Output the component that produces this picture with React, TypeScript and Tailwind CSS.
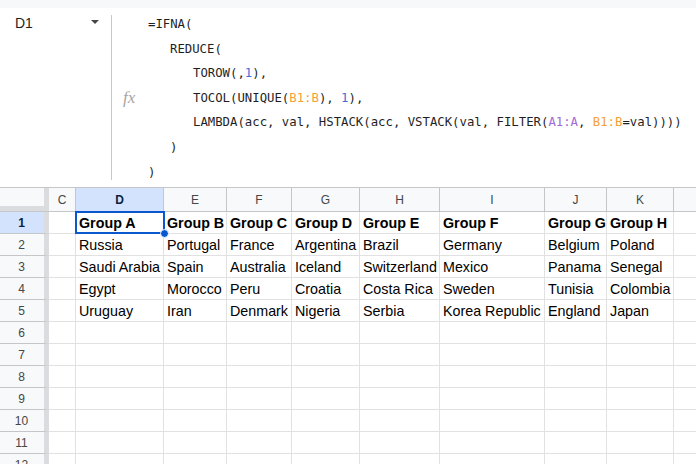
import React from 'react'

const COLS = [
  { label: 'C', w: 27 },
  { label: 'D', w: 88 },
  { label: 'E', w: 63 },
  { label: 'F', w: 65 },
  { label: 'G', w: 68 },
  { label: 'H', w: 80 },
  { label: 'I', w: 105 },
  { label: 'J', w: 62 },
  { label: 'K', w: 67 },
  { label: '', w: 40 },
]

const DATA: string[][] = [
  ['Group A', 'Group B', 'Group C', 'Group D', 'Group E', 'Group F', 'Group G', 'Group H'],
  ['Russia', 'Portugal', 'France', 'Argentina', 'Brazil', 'Germany', 'Belgium', 'Poland'],
  ['Saudi Arabia', 'Spain', 'Australia', 'Iceland', 'Switzerland', 'Mexico', 'Panama', 'Senegal'],
  ['Egypt', 'Morocco', 'Peru', 'Croatia', 'Costa Rica', 'Sweden', 'Tunisia', 'Colombia'],
  ['Uruguay', 'Iran', 'Denmark', 'Nigeria', 'Serbia', 'Korea Republic', 'England', 'Japan'],
]

const Num = ({ children }: { children: React.ReactNode }) => (
  <span className="text-[#3f6fd6]">{children}</span>
)
const Orange = ({ children }: { children: React.ReactNode }) => (
  <span className="text-[#f2a03a]">{children}</span>
)
const Purple = ({ children }: { children: React.ReactNode }) => (
  <span className="text-[#a06bd6]">{children}</span>
)

const FormulaBar = () => (
  <div className="flex h-[179px] bg-white">
    <div className="flex w-[111px] items-start justify-between pl-[15px] pr-[12px] pt-[6px]">
      <span className="font-['Liberation_Sans',sans-serif] text-[14px] leading-[18px] text-[#1f1f1f]">
        D1
      </span>
      <span className="mt-[6px] h-0 w-0 border-x-[4px] border-t-[4px] border-x-transparent border-t-[#444746]" />
    </div>
    <div className="my-[7px] w-px bg-[#c7c7c7]" />
    <div className="flex w-[36px] items-center pl-[11px]">
      <span className="font-['Liberation_Serif',serif] text-[17px] italic text-[#a6a6a6]">fx</span>
    </div>
    <div className="whitespace-pre pt-[4px] font-['DejaVu_Sans_Mono',monospace] text-[12.3px] leading-[24.6px] text-[#1f1f1f]">
      <div>=IFNA(</div>
      <div className="pl-[22px]">REDUCE(</div>
      <div className="pl-[45px]">
        TOROW(,<Num>1</Num>),
      </div>
      <div className="pl-[45px]">
        TOCOL(UNIQUE(<Orange>B1:B</Orange>), <Num>1</Num>),
      </div>
      <div className="pl-[45px]">
        LAMBDA(acc, val, HSTACK(acc, VSTACK(val, FILTER(<Purple>A1:A</Purple>, <Orange>B1:B</Orange>=val))))
      </div>
      <div className="pl-[22px]">)</div>
      <div>)</div>
    </div>
  </div>
)

const Grid = () => {
  const rows = Array.from({ length: 12 }, (_, i) => i + 1)
  return (
    <div className="relative font-['Liberation_Sans',sans-serif]">
      {/* column headers */}
      <div className="flex h-[25px] border-y border-[#c4c7c5] bg-[#f8f9fa]">
        <div className="flex w-[49px] shrink-0">
          <div className="flex-1 border-b-[5px] border-[#dadce0]" />
          <div className="w-[5px] bg-[#dadce0]" />
        </div>
        {COLS.map((c) => (
          <div
            key={c.label || 'x'}
            style={{ width: c.w }}
            className={`flex shrink-0 items-center justify-center border-r border-[#c4c7c5] pt-[1px] text-[12px] ${
              c.label === 'D' ? 'bg-[#d3e3fd] font-bold text-[#0b1f3f]' : 'text-[#444746]'
            }`}
          >
            {c.label}
          </div>
        ))}
      </div>
      {rows.map((r) => (
        <div key={r} className="flex h-[22px]">
          <div
            className={`flex w-[49px] shrink-0 items-center justify-center border-b border-r-[5px] border-b-[#c4c7c5] border-r-[#dadce0] pr-[1px] pt-[1px] text-[12px] ${
              r === 1 ? 'bg-[#d3e3fd] font-bold text-[#0b1f3f]' : 'bg-[#f8f9fa] text-[#444746]'
            }`}
          >
            {r}
          </div>
          {COLS.map((c, ci) => {
            const val = ci >= 1 && ci <= 8 ? DATA[r - 1]?.[ci - 1] : undefined
            return (
              <div
                key={ci}
                style={{ width: c.w }}
                className={`flex shrink-0 items-center overflow-visible whitespace-nowrap border-b border-r border-[#e1e1e1] pl-[3px] pt-[3px] text-[14.3px] text-black ${
                  r === 1 ? 'font-bold' : ''
                }`}
              >
                {val}
              </div>
            )
          })}
        </div>
      ))}
      {/* selection on D1 */}
      <div className="pointer-events-none absolute left-[75px] top-[24px] h-[23px] w-[90px] border-2 border-[#0b57d0]" />
      <div className="absolute left-[160px] top-[42px] h-[9px] w-[9px] rounded-full border border-white bg-[#0b57d0]" />
    </div>
  )
}

export default function App() {
  return (
    <div className="h-[464px] w-[696px] overflow-hidden bg-white">
      <div className="h-[8px] bg-[#f6f8fa]" />
      <FormulaBar />
      <Grid />
    </div>
  )
}
